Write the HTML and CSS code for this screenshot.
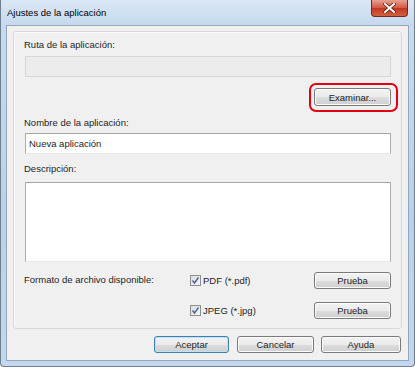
FILE: index.html
```html
<!DOCTYPE html>
<html lang="es">

<head>
  <meta charset="UTF-8">
  <meta name="viewport" content="width=device-width, initial-scale=1.0">
  <title>Ajustes de la aplicación</title>
  <link rel="stylesheet" href="styles.css">
</head>

<body>
  <div class="window">
    <div class="titlebar">
      <span class="title">Ajustes de la aplicación</span>
      <div class="close">
        <svg width="13" height="10" viewBox="0 0 13 10">
          <path d="M2 1 L11 9 M11 1 L2 9" stroke="#5a1a12" stroke-width="3.4" stroke-linecap="square" />
          <path d="M2 1 L11 9 M11 1 L2 9" stroke="#fff" stroke-width="2" stroke-linecap="square" />
        </svg>
      </div>
    </div>

    <div class="client">
      <div class="panel">
        <div class="label first">Ruta de la aplicación:</div>
        <div class="field disabled"></div>

        <div class="browse-row">
          <div class="ring">
            <button class="btn browse">Examinar...</button>
          </div>
        </div>

        <div class="label name-label">Nombre de la aplicación:</div>
        <div class="field name">Nueva aplicación</div>

        <div class="label desc-label">Descripción:</div>
        <div class="field desc"></div>

        <!-- formatos -->
        <div class="formats">
          <div class="label">Formato de archivo disponible:</div>
          <label class="check"><span class="box"><svg width="9" height="9" viewBox="0 0 9 9"><path d="M1.5 4.5 L3.5 7 L7.5 1.5" fill="none" stroke="#4b5f9b" stroke-width="1.4" /></svg></span>PDF (*.pdf)</label>
          <button class="btn">Prueba</button>

          <div></div>
          <label class="check"><span class="box"><svg width="9" height="9" viewBox="0 0 9 9"><path d="M1.5 4.5 L3.5 7 L7.5 1.5" fill="none" stroke="#4b5f9b" stroke-width="1.4" /></svg></span>JPEG (*.jpg)</label>
          <button class="btn">Prueba</button>
        </div>
      </div>

      <div class="actions">
        <button class="btn default ok">Aceptar</button>
        <button class="btn cancel">Cancelar</button>
        <button class="btn help">Ayuda</button>
      </div>
    </div>
  </div>
</body>

</html>
```

FILE: styles.css
```css
body {
  margin: 0;
  font-family: "Liberation Sans", Arial, sans-serif;
  font-size: 9.5px;
  color: #1e1e1e;
}

.window {
  width: 415px;
  height: 367px;
  box-sizing: border-box;
  background: linear-gradient(#c9dcf0, #b9d1ea 60%, #c3d8ee);
  border: 1px solid #6f7f92;
  border-top: 0;
  border-radius: 0 0 4px 4px;
  padding: 0 5px 5px 5px;
  display: flex;
  flex-direction: column;
}

.titlebar {
  height: 25px;
  display: flex;
  align-items: flex-start;
  justify-content: space-between;
  background: linear-gradient(#dbe8f5, #c6d9ee);
  margin: 0 -5px;
  padding: 0 5px 0 6px;
}

.title {
  margin-top: 7px;
  font-size: 9.5px;
  color: #000;
}

.close {
  width: 37px;
  height: 17px;
  box-sizing: border-box;
  margin-right: 1px;
  border: 1px solid #6d2a22;
  border-top: 0;
  border-radius: 0 0 4px 4px;
  background: linear-gradient(#e8a193, #d2553f 50%, #c2361f 51%, #d2623f);
  display: flex;
  align-items: center;
  justify-content: center;
}

.client {
  flex: 1;
  background: #f0f0f0;
  border: 1px solid #94a6bb;
  display: flex;
  flex-direction: column;
}

.panel {
  margin: 5px 6px 0 6px;
  border: 1px solid #d8d8d8;
  border-radius: 3px;
  box-shadow: inset 1px 1px 0 #fbfbfb;
  padding: 0 10px 9px 10px;
  display: flex;
  flex-direction: column;
}

.label {
  line-height: 15px;
  height: 15px;
}

.label.first {
  margin-top: 5px;
}

.field {
  margin-left: 1px;
  height: 21px;
  box-sizing: border-box;
  background: #fff;
  border: 1px solid #abadb3;
  border-top-color: #a0a5ae;
  border-bottom-color: #e3e9ef;
  padding: 0 3px;
  line-height: 19px;
}

.field.disabled {
  margin-top: 4px;
  background: #ececec;
  border-color: #d5d5d5;
}

.browse-row {
  margin-top: 11px;
  display: flex;
  justify-content: flex-end;
}

.ring {
  position: relative;
}

/* marca roja alrededor del botón */
.ring::after {
  content: "";
  position: absolute;
  top: -5px;
  bottom: -6px;
  left: -5px;
  right: -7px;
  border: 2px solid #e3000f;
  border-radius: 7px;
}

.btn {
  font-family: inherit;
  font-size: 9.5px;
  color: #1e1e1e;
  width: 77px;
  height: 18px;
  padding: 0;
  border: 1px solid #7a7a7a;
  border-radius: 3px;
  background: linear-gradient(#f2f2f2, #ebebeb 50%, #dddddd 51%, #cfcfcf);
  box-shadow: inset 0 0 0 1px #fcfcfc;
}

.name-label {
  margin-top: 9px;
}

.field.name {
  margin-top: 3px;
  height: 21px;
}

.desc-label {
  margin-top: 7px;
}

.field.desc {
  margin-top: 6px;
  height: 80px;
}

.formats {
  margin-top: 10px;
  display: grid;
  grid-template-columns: 166px 1fr 77px;
  grid-auto-rows: 17px;
  row-gap: 13px;
  align-items: center;
}

.formats .btn {
  height: 17px;
}

.formats .label {
  align-self: start;
}

.check {
  display: flex;
  align-items: center;
  gap: 2px;
}

.box {
  width: 11px;
  height: 11px;
  box-sizing: border-box;
  border: 1px solid #8e8f8f;
  background: linear-gradient(135deg, #dcdcdc, #f8f8f8);
  display: flex;
  align-items: center;
  justify-content: center;
}

.actions {
  margin: 7px 7px 0 0;
  display: flex;
  justify-content: flex-end;
}

.actions .btn {
  height: 17px;
}

.actions .ok {
  width: 75px;
}

.actions .cancel {
  width: 77px;
  margin-left: 8px;
}

.actions .help {
  width: 80px;
  margin-left: 7px;
}

.actions .btn.default {
  border-color: #3c7fb1;
  box-shadow: inset 0 0 0 1px #bfe3f6;
}
```
